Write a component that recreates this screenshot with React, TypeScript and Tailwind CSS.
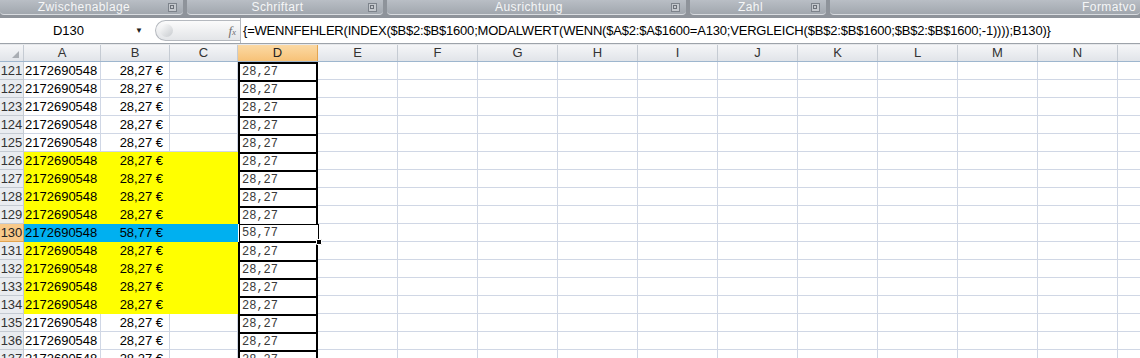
import React from "react";

const rows = Array.from({ length: 17 }, (_, i) => 121 + i);
const extraCols = ["E", "F", "G", "H", "I", "J", "K", "L", "M", "N"];

const groups = [
  { label: "Zwischenablage", w: 183 },
  { label: "Schriftart", w: 196 },
  { label: "Ausrichtung", w: 299 },
  { label: "Zahl", w: 136 },
  { label: "Formatvo", w: 320, last: true },
];

function Launcher() {
  return (
    <div className="w-[9px] h-[9px] border border-[#7d838b] bg-[#c4c8cd] flex items-start justify-start">
      <div className="w-[4px] h-[4px] border border-[#6b7078] ml-[1px] mt-[1px]" />
    </div>
  );
}

export default function App() {
  return (
    <div
      className="w-[1140px] h-[358px] overflow-hidden bg-white text-black"
      style={{ fontFamily: '"Liberation Sans", Arial, sans-serif' }}
    >
      {/* Ribbon group labels */}
      <div className="h-[18px] bg-[#8e939a] flex gap-[4px] items-start">
        {groups.map((g, i) => (
          <div
            key={i}
            className={`h-[15px] flex items-center rounded-b-[4px] bg-gradient-to-b from-[#b9bec5] to-[#a1a7ae] border-b border-[#d9dce0] ${
              g.last ? "justify-end pr-[4px] flex-1" : "pr-[6px]"
            }`}
            style={{ width: g.last ? undefined : g.w }}
          >
            {g.last ? (
              <span className="text-[12px] text-[#f5f6f7] tracking-[0.4px] whitespace-nowrap">{g.label}</span>
            ) : (
              <>
                <span className="flex-1 text-center text-[12px] text-[#f5f6f7] tracking-[0.4px]">{g.label}</span>
                <Launcher />
              </>
            )}
          </div>
        ))}
      </div>

      {/* Formula bar */}
      <div className="h-[26px] flex bg-white border-b border-[#9da3aa]">
        <div className="w-[155px] flex items-center relative">
          <span className="flex-1 text-center text-[13px] pl-[2px]">D130</span>
          <span className="w-[16px] text-[8px] text-[#222] mr-[4px]">▼</span>
        </div>
        <div className="w-[85px] my-[2px] flex items-center rounded-l-full border border-r-0 border-[#b5b9bf] bg-gradient-to-b from-[#fbfbfb] to-[#e3e5e8]">
          <div className="w-[13px] h-[13px] rounded-full bg-gradient-to-br from-[#ffffff] to-[#c0c4c8] ml-[4px] opacity-80" />
          <div className="flex-1" />
          <span
            className="text-[13px] italic text-[#6f6f6f] mr-[4px]"
            style={{ fontFamily: '"Liberation Serif", "Times New Roman", serif' }}
          >
            f<span className="text-[9px]">x</span>
          </span>
        </div>
        <div className="flex-1 border-l border-[#b5b9bf] flex items-center pl-[2px] text-[13px] tracking-[-0.2px] whitespace-nowrap">
          {"{=WENNFEHLER(INDEX($B$2:$B$1600;MODALWERT(WENN($A$2:$A$1600=A130;VERGLEICH($B$2:$B$1600;$B$2:$B$1600;-1))));B130)}"}
        </div>
      </div>
      <div className="h-[1px] bg-[#e6e8eb]" />

      {/* Column headers */}
      <div className="flex h-[17px] border-b border-[#9eb6ce] text-[13px] text-[#333]">
        <div className="w-[24px] border-r border-[#c5cbd3] bg-gradient-to-b from-[#f5f6f8] to-[#e1e4e9] flex items-end justify-end pr-[4px] pb-[3px]">
          <div
            className="w-[7px] h-[7px] bg-[#a9adb3]"
            style={{ clipPath: "polygon(100% 0, 100% 100%, 0 100%)" }}
          />
        </div>
        {[
          { l: "A", w: 77 },
          { l: "B", w: 69 },
          { l: "C", w: 68 },
        ].map((c) => (
          <div
            key={c.l}
            className="border-r border-[#c5cbd3] bg-gradient-to-b from-[#f5f6f8] to-[#e1e4e9] flex items-center justify-center"
            style={{ width: c.w }}
          >
            {c.l}
          </div>
        ))}
        <div className="w-[80px] border-r border-[#e3a550] bg-gradient-to-b from-[#fbd9a4] to-[#f7c277] flex items-center justify-center text-[#222]">
          D
        </div>
        {extraCols.map((c) => (
          <div
            key={c}
            className="w-[80px] border-r border-[#c5cbd3] bg-gradient-to-b from-[#f5f6f8] to-[#e1e4e9] flex items-center justify-center"
          >
            {c}
          </div>
        ))}
        <div className="flex-1 bg-gradient-to-b from-[#f5f6f8] to-[#e1e4e9]" />
      </div>

      {/* Rows */}
      {rows.map((r) => {
        const yellow = (r >= 126 && r <= 129) || (r >= 131 && r <= 134);
        const blue = r === 130;
        const fill = yellow ? "bg-[#ffff00] border-[#ffff00]" : blue ? "bg-[#00b0f0] border-[#00b0f0]" : "bg-white border-[#d0d7e5]";
        const value = blue ? "58,77" : "28,27";
        return (
          <div key={r} className="flex h-[18px] text-[13px]">
            <div
              className={`w-[24px] border-r border-b flex items-center justify-center text-[13px] ${
                blue
                  ? "bg-[#f8c98a] border-[#e3a550] text-[#222]"
                  : "bg-[#e9ecf0] border-[#c5cbd3] text-[#333]"
              }`}
            >
              {r}
            </div>
            <div className={`w-[77px] border-r border-b flex items-center pl-[1px] ${fill}`}>2172690548</div>
            <div className={`w-[69px] border-r border-b flex items-center justify-end pr-[6px] ${fill}`}>
              {blue ? "58,77 €" : "28,27 €"}
            </div>
            <div className={`w-[68px] border-r border-b ${fill}`} />
            {blue ? (
              <div className="w-[80px] h-[18px] border border-black ml-[1px] mr-[-1px] relative flex items-center pl-[2px]">
                <span
                  className="text-[12px] text-[#3a3a3a]"
                  style={{ fontFamily: '"Liberation Mono", "Courier New", monospace' }}
                >
                  {value}
                </span>
                <div className="absolute right-[-4px] bottom-[-4px] w-[6px] h-[6px] bg-black border border-white rounded-[1px]" />
              </div>
            ) : (
              <div
                className={`w-[80px] h-[18px] border-x-2 border-black flex items-center pl-[2px] ${
                  r === 131 ? "border-t" : "border-t-2"
                }`}
              >
                <span
                  className="text-[12px] text-[#3a3a3a]"
                  style={{ fontFamily: '"Liberation Mono", "Courier New", monospace' }}
                >
                  {value}
                </span>
              </div>
            )}
            {extraCols.map((c) => (
              <div key={c} className="w-[80px] border-r border-b border-[#d0d7e5]" />
            ))}
            <div className="flex-1 border-b border-[#d0d7e5]" />
          </div>
        );
      })}
    </div>
  );
}
